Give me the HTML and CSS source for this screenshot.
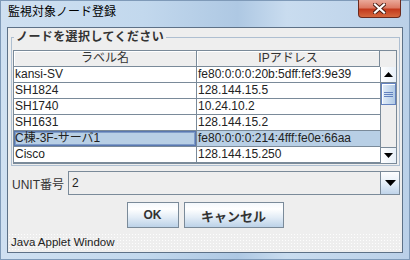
FILE: index.html
```html
<!DOCTYPE html>
<html>
	<head>
		<meta charset="UTF-8">
		<title>監視対象ノード登録</title>
		<link rel="stylesheet" href="styles.css">
	</head>
	<body>
		<div class="window">
			<div class="titlebar">
				<span class="title">監視対象ノード登録</span>
				<span class="close">
					<svg width="13" height="11" viewBox="0 0 13 11">
						<path d="M2 1.5 L11 9.5 M11 1.5 L2 9.5" stroke="#4a1d14" stroke-width="4" stroke-linecap="square"/>
						<path d="M2 1.5 L11 9.5 M11 1.5 L2 9.5" stroke="#ffffff" stroke-width="2.2" stroke-linecap="square"/>
					</svg>
				</span>
			</div>
			<div class="client">
				<fieldset class="group">
					<legend>ノードを選択してください</legend>
					<div class="pane">
						<div class="th">ラベル名</div>
						<div class="th">IPアドレス</div>
						<div class="corner"></div>
						<div class="vscroll">
							<span class="arrow up">
								<svg width="9" height="5" viewBox="0 0 9 5"><polygon points="0,5 9,5 4.5,0" fill="#000"/></svg>
							</span>
							<span class="thumb">
								<svg width="9" height="5" viewBox="0 0 9 5">
									<rect x="0" y="0" width="9" height="1" fill="#6382bf"/>
									<rect x="0" y="2" width="9" height="1" fill="#6382bf"/>
									<rect x="0" y="4" width="9" height="1" fill="#6382bf"/>
								</svg>
							</span>
							<span class="track"></span>
							<span class="arrow down">
								<svg width="9" height="5" viewBox="0 0 9 5"><polygon points="0,0 9,0 4.5,5" fill="#000"/></svg>
							</span>
						</div>
						<div class="td">kansi-SV</div>
						<div class="td">fe80:0:0:0:20b:5dff:fef3:9e39</div>
						<div class="td">SH1824</div>
						<div class="td">128.144.15.5</div>
						<div class="td">SH1740</div>
						<div class="td">10.24.10.2</div>
						<div class="td">SH1631</div>
						<div class="td">128.144.15.2</div>
						<div class="td sel focus">C棟-3F-サーバ1</div>
						<div class="td sel">fe80:0:0:0:214:4fff:fe0e:66aa</div>
						<div class="td">Cisco</div>
						<div class="td">128.144.15.250</div>
					</div>
				</fieldset>
				<div class="unit">
					<span class="unit-label">UNIT番号</span>
					<div class="combo">
						<span class="value">2</span>
						<span class="drop">
							<svg width="11" height="6" viewBox="0 0 11 6"><polygon points="0,0 11,0 5.5,6" fill="#000"/></svg>
						</span>
					</div>
				</div>
				<div class="buttons">
					<button class="btn ok">OK</button>
					<button class="btn cancel">キャンセル</button>
				</div>
				<div class="warning">Java Applet Window</div>
			</div>
		</div>
	</body>
</html>
```

FILE: styles.css
```css
	body{
		margin:0;
		font-family:"Liberation Sans","Noto Sans CJK JP",sans-serif;
		font-size:12px;
	}
	.window{
		width:410px;
		height:260px;
		display:flex;
		flex-direction:column;
		background:linear-gradient(to right,#cfe0f1 0%,#c2d8ed 35%,#aec8e3 58%,#c9dcef 70%,#bad0e8 100%);
		box-shadow:inset 0 0 0 1px #7f9ab8;
	}
	.titlebar{
		height:27px;
		flex-shrink:0;
		display:flex;
		justify-content:space-between;
		align-items:flex-start;
	}
	.title{
		padding:4px 0 0 8px;
		line-height:16px;
		color:#000;
	}
	.close{
		width:43px;
		height:18px;
		margin-right:9px;
		box-sizing:border-box;
		border:1px solid #6b2a1e;
		border-top:none;
		border-radius:0 0 4px 4px;
		background:linear-gradient(#eaa99a,#dc7a64 45%,#c33a1d 55%,#d5683f);
		display:flex;
		align-items:center;
		justify-content:center;
	}
	.client{
		flex:1;
		margin:0 7px 7px;
		border:1px solid #5d7187;
		background:#eeeeee;
		display:flex;
		flex-direction:column;
		min-height:0;
	}
	.group{
		margin:1px 2px 0 3px;
		padding:5px 2px 1px 1px;
		border:1px solid #aebfd1;
		min-width:0;
	}
	.group legend{
		margin-left:1px;
		padding:0 2px;
		line-height:16px;
		font-weight:bold;
		letter-spacing:0.4px;
		color:#333;
	}
	.pane{
		display:grid;
		grid-template-columns:183px 183px 16px;
		border:1px solid #7a8a99;
		background:#fff;
	}
	.th{
		height:16px;
		box-sizing:border-box;
		border-right:1px solid #7a8a99;
		border-bottom:1px solid #7a8a99;
		background:#eeeeee;
		box-shadow:inset 1px 1px 0 #fff;
		text-align:center;
		line-height:15px;
		color:#333;
	}
	.corner{
		background:#eeeeee;
	}
	.td{
		height:16px;
		box-sizing:border-box;
		padding-left:1px;
		border-bottom:1px solid #7a8a99;
		line-height:15px;
		white-space:nowrap;
		overflow:hidden;
		color:#222;
	}
	.td:nth-child(odd){
		border-right:1px solid #7a8a99;
	}
	.td.sel{
		background:#b8cfe5;
	}
	.td.focus{
		box-shadow:inset 0 0 0 1px #5a78b0,inset 0 0 0 2px #7f9cc8;
	}
	.vscroll{
		grid-column:3;
		grid-row:2 / 8;
		border-left:1px solid #7a8a99;
		background:#eeeeee;
		display:flex;
		flex-direction:column;
	}
	.arrow{
		height:15px;
		flex-shrink:0;
		display:flex;
		align-items:center;
		justify-content:center;
		background:linear-gradient(to right,#ffffff,#e8f0f8);
	}
	.arrow.up{
		border-bottom:1px solid #7a8a99;
	}
	.arrow.down{
		border-top:1px solid #7a8a99;
	}
	.thumb{
		height:22px;
		flex-shrink:0;
		box-sizing:border-box;
		border:1px solid #6382bf;
		background:linear-gradient(to right,#e4eef8,#c4d8ee 60%,#b2cae4);
		box-shadow:inset 1px 1px 0 #fff;
		display:flex;
		align-items:center;
		justify-content:center;
	}
	.track{
		flex:1;
	}
	.unit{
		display:flex;
		align-items:center;
		margin:5px 2px 0 4px;
		height:24px;
	}
	.unit-label{
		width:56px;
		color:#333;
	}
	.combo{
		flex:1;
		height:24px;
		box-sizing:border-box;
		display:flex;
		border:1px solid #7a8a99;
		background:#eeeeee;
	}
	.value{
		flex:1;
		padding-left:3px;
		line-height:22px;
		color:#222;
	}
	.drop{
		width:18px;
		border-left:1px solid #7a8a99;
		background:linear-gradient(#fdfeff,#e6eff8 50%,#bfd4ea);
		display:flex;
		align-items:center;
		justify-content:center;
	}
	.buttons{
		display:flex;
		justify-content:center;
		gap:5px;
		margin-top:7px;
	}
	.btn{
		height:26px;
		padding:0;
		border:1px solid #7a8a99;
		background:linear-gradient(#f4f8fc,#ffffff 25%,#e2ecf6 60%,#bcd2e8);
		font-family:"Liberation Sans","Noto Sans CJK JP",sans-serif;
		font-size:12px;
		font-weight:bold;
		color:#333;
	}
	.ok{
		width:52px;
	}
	.cancel{
		width:100px;
		font-size:13px;
	}
	.warning{
		margin-top:auto;
		height:19px;
		padding-left:3px;
		line-height:19px;
		font-size:11.5px;
		color:#222;
		background-color:#eeeeee;
		background-image:radial-gradient(circle,#fdfdfd 0.6px,transparent 0.9px);
		background-size:3px 3px;
	}
```
